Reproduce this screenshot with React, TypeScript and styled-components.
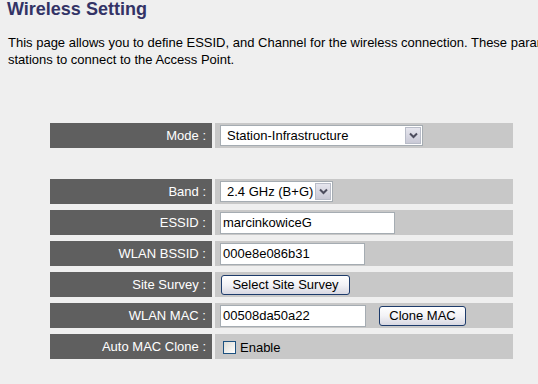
import React from "react";
import styled, { createGlobalStyle } from "styled-components";

const Global = createGlobalStyle`
  html, body { margin: 0; padding: 0; background: #efefef; }
  body { font-family: "Liberation Sans", Arial, sans-serif; overflow: hidden; }
`;

const Page = styled.div`
  width: 538px;
  height: 384px;
  padding-left: 7px;
  box-sizing: border-box;
  overflow: hidden;
`;

const Title = styled.h1`
  margin: 0;
  font-size: 18px;
  line-height: 18px;
  font-weight: bold;
  color: #333366;
`;

const Intro = styled.p`
  margin: 16px 0 0 1px;
  font-size: 13px;
  line-height: 17px;
  color: #000;
  white-space: nowrap;
`;

const Form = styled.div`
  display: grid;
  grid-template-columns: 162px 298px;
  column-gap: 3px;
  row-gap: 6px;
  margin: 55px 0 0 43px;
`;

const Label = styled.div`
  height: 25px;
  display: flex;
  align-items: center;
  justify-content: flex-end;
  padding-right: 6px;
  background: #5f5f5f;
  color: #ffffff;
  font-size: 13px;
`;

const Value = styled.div`
  height: 25px;
  display: flex;
  align-items: center;
  padding-left: 5px;
  background: #c8c8c8;
  font-size: 13px;
  color: #000;
`;

const Spacer = styled.div`
  grid-column: 1 / -1;
  height: 19px;
`;

const SelectBox = styled.div<{ $w: number }>`
  width: ${(p) => p.$w}px;
  height: 21px;
  box-sizing: border-box;
  border: 1px solid #a5acb2;
  background: #fff;
  display: flex;
  align-items: center;
  justify-content: space-between;
  padding: 1px 1px 1px 6px;
  font-size: 13px;
`;

const ArrowBox = styled.span`
  width: 16px;
  height: 17px;
  box-sizing: border-box;
  border: 1px solid #b8bcc8;
  background: linear-gradient(#e6e6ee, #c9c9d6);
  display: flex;
  align-items: center;
  justify-content: center;
`;

const TextField = styled.div<{ $w: number }>`
  width: ${(p) => p.$w}px;
  height: 22px;
  box-sizing: border-box;
  border: 1px solid #a5acb2;
  background: #fff;
  display: flex;
  align-items: center;
  padding-left: 2px;
  font-size: 13px;
`;

const Button = styled.button<{ $w: number; $ml?: number }>`
  width: ${(p) => p.$w}px;
  height: 20px;
  margin-left: ${(p) => p.$ml ?? 1}px;
  padding: 0;
  box-sizing: border-box;
  border: 1px solid #1d3b6b;
  border-radius: 3px;
  background: linear-gradient(#ffffff, #f2f2f6 50%, #d8d8e2);
  font-family: "Liberation Sans", Arial, sans-serif;
  font-size: 13px;
  color: #000;
`;

const CheckLabel = styled.label`
  display: flex;
  align-items: center;
  gap: 4px;
  margin-left: 3px;
  margin-top: 2px;
  font-size: 13px;
`;

const CheckBox = styled.span`
  width: 13px;
  height: 13px;
  box-sizing: border-box;
  border: 1px solid #1c5180;
  background: linear-gradient(135deg, #dcdcd6, #ffffff);
`;

const Chevron = () => (
  <svg width="9" height="7" viewBox="0 0 9 7">
    <path d="M1 1.5 L4.5 5 L8 1.5" fill="none" stroke="#4d4d5e" strokeWidth="2" />
  </svg>
);

const Select = ({ w, text }: { w: number; text: string }) => (
  <SelectBox $w={w}>
    <span>{text}</span>
    <ArrowBox>
      <Chevron />
    </ArrowBox>
  </SelectBox>
);

export default function App() {
  return (
    <>
      <Global />
      <Page>
        <Title>Wireless Setting</Title>
        <Intro>
          This page allows you to define ESSID, and Channel for the wireless connection. These parameters are used for the wireless
          <br />
          stations to connect to the Access Point.
        </Intro>
        <Form>
          <Label>Mode :</Label>
          <Value>
            <Select w={203} text="Station-Infrastructure" />
          </Value>
          <Spacer />
          <Label>Band :</Label>
          <Value>
            <Select w={113} text="2.4 GHz (B+G)" />
          </Value>
          <Label>ESSID :</Label>
          <Value>
            <TextField $w={175}>marcinkowiceG</TextField>
          </Value>
          <Label>WLAN BSSID :</Label>
          <Value>
            <TextField $w={145}>000e8e086b31</TextField>
          </Value>
          <Label>Site Survey :</Label>
          <Value>
            <Button $w={129}>Select Site Survey</Button>
          </Value>
          <Label>WLAN MAC :</Label>
          <Value>
            <TextField $w={146}>00508da50a22</TextField>
            <Button $w={87} $ml={13}>Clone MAC</Button>
          </Value>
          <Label>Auto MAC Clone :</Label>
          <Value>
            <CheckLabel>
              <CheckBox />
              Enable
            </CheckLabel>
          </Value>
        </Form>
      </Page>
    </>
  );
}
